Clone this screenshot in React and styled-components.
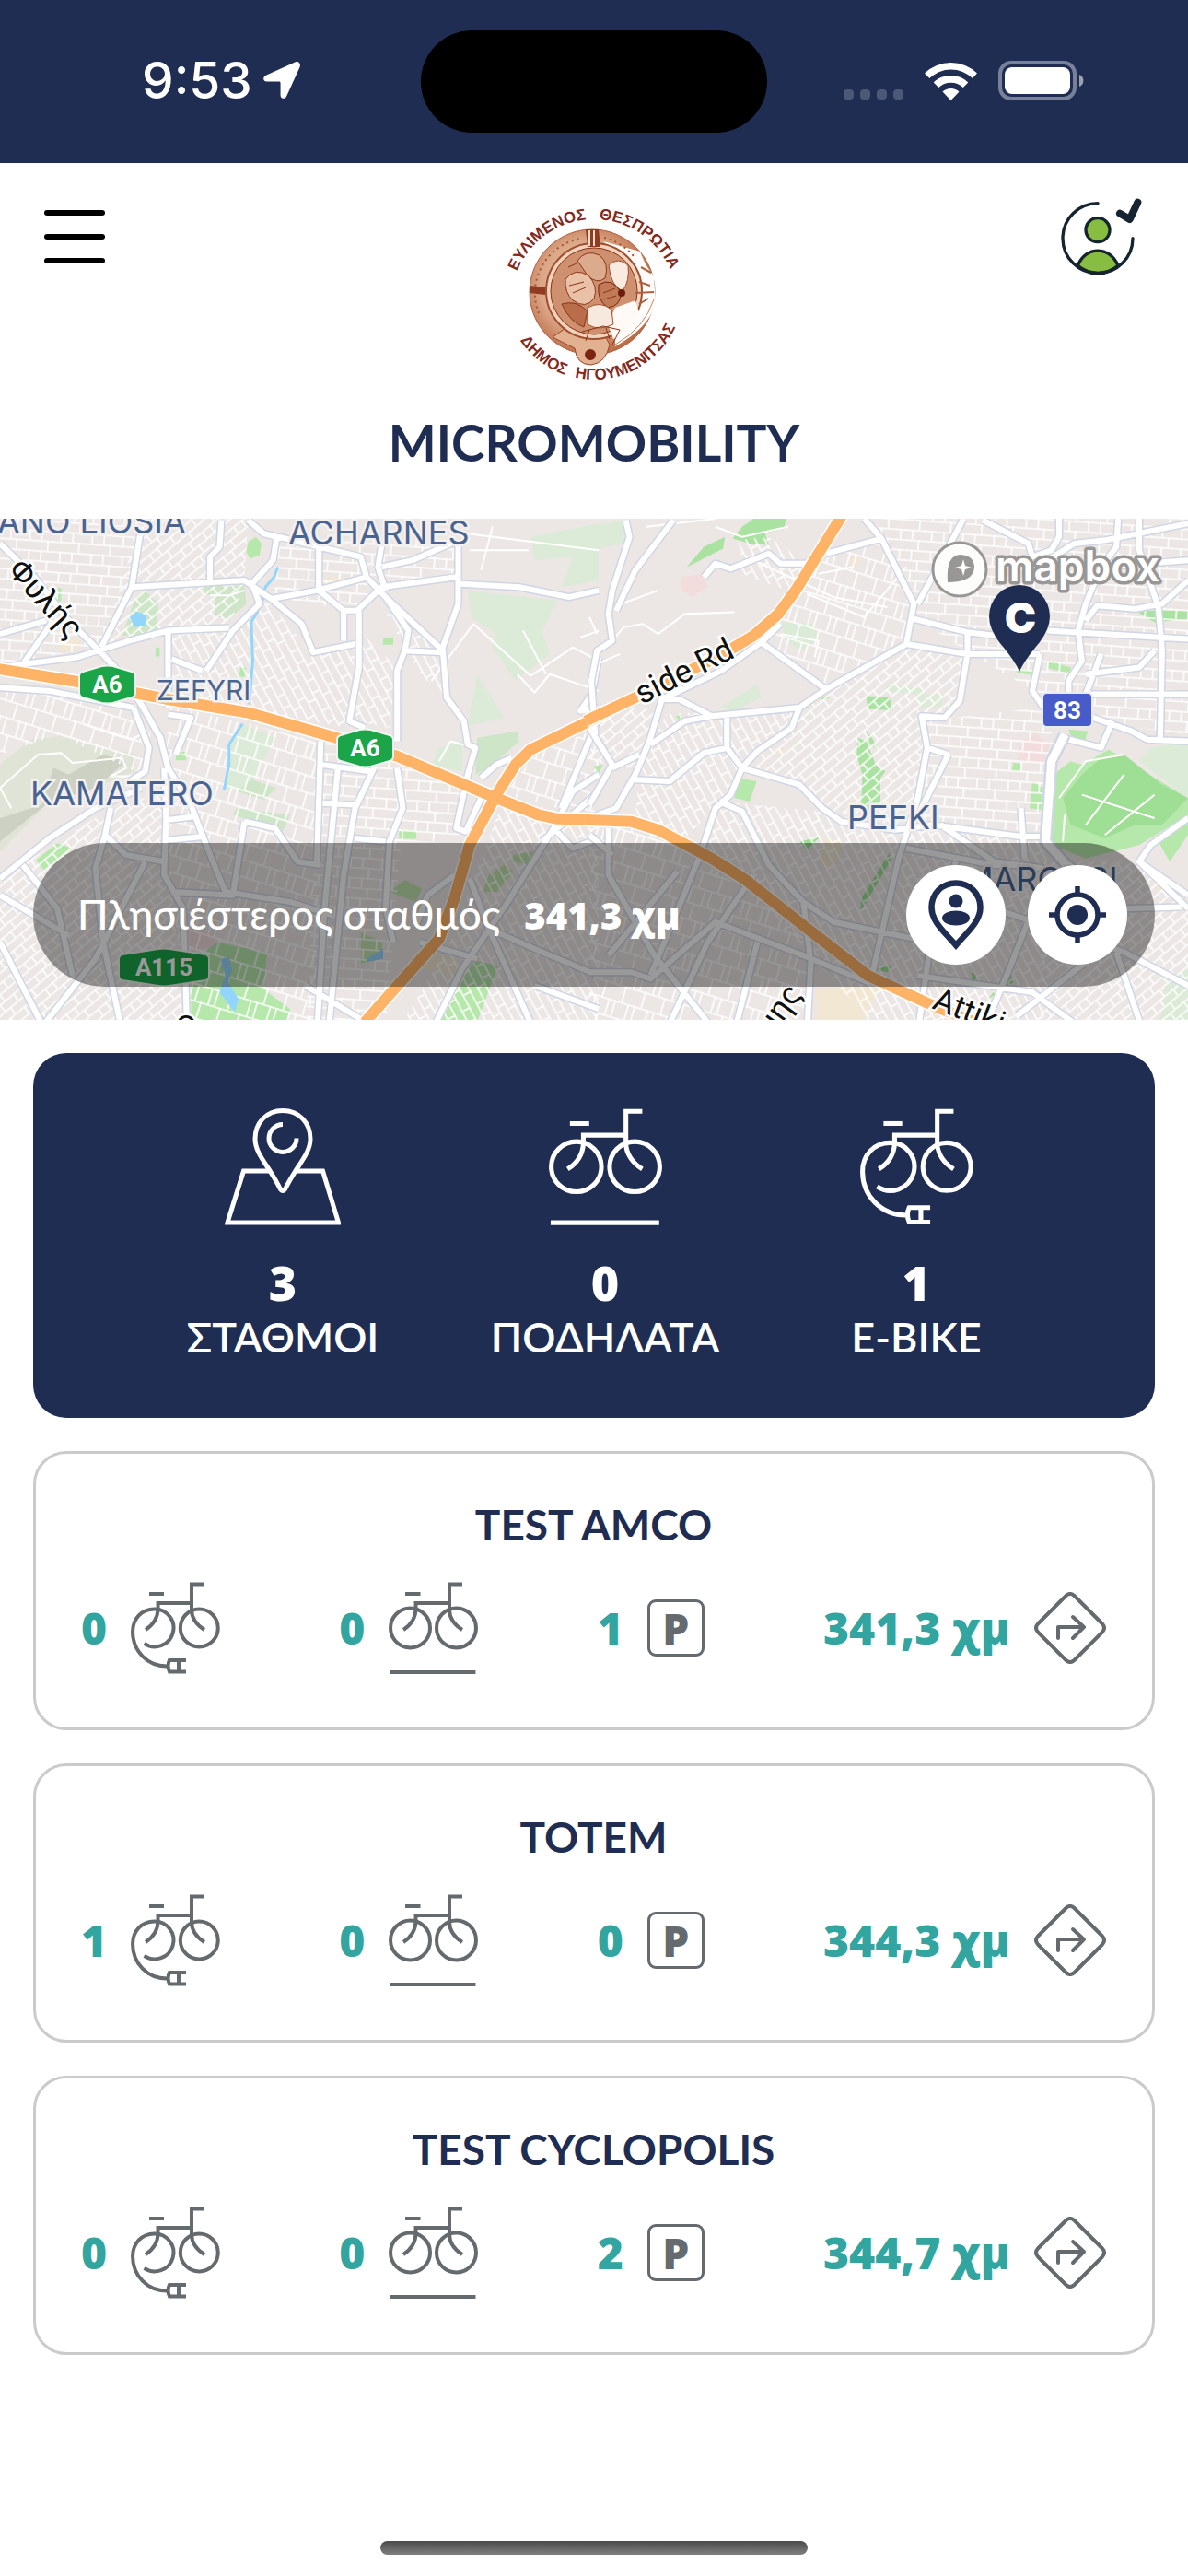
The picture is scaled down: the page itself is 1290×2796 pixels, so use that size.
import React from "react";
import styled, { createGlobalStyle } from "styled-components";

const navy = "#1e2d51";
const teal = "#32a5a0";
const grey = "#646a6e";

const GlobalStyle = createGlobalStyle`
  * { box-sizing: border-box; }
  body {
    margin: 0;
    background: #fff;
    font-family: Lato, "Open Sans", "Noto Sans", sans-serif;
    color: ${navy};
  }
  button {
    border: 0;
    padding: 0;
    background: none;
    font: inherit;
    color: inherit;
    cursor: pointer;
  }
  svg { display: block; }
`;

const Page = styled.div`
  min-height: 100vh;
  display: flex;
  flex-direction: column;
`;

/* ---------- status bar ---------- */

const StatusBar = styled.div`
  height: 177px;
  background: ${navy};
  color: #fff;
  display: grid;
  grid-template-columns: 1fr auto 1fr;
  align-items: center;
`;

const Clock = styled.div`
  display: flex;
  align-items: center;
  gap: 11px;
  padding: 0 0 3px 154px;
  font-family: Inter, sans-serif;
  font-size: 55px;
  line-height: 60px;
  font-weight: 500;
`;

const Island = styled.div`
  width: 376px;
  height: 111px;
  border-radius: 56px;
  background: #000;
`;

const Signals = styled.div`
  display: flex;
  align-items: flex-end;
  justify-content: flex-end;
  gap: 23px;
  padding: 0 113px 3px 0;
`;

/* ---------- header ---------- */

const Header = styled.header`
  display: flex;
  flex-direction: column;
  align-items: center;
  height: 386px;
  padding-top: 36px;
`;

const HeaderRow = styled.div`
  width: 100%;
  display: grid;
  grid-template-columns: 1fr auto 1fr;
  align-items: start;
  padding: 0 48px;
`;

const MenuButton = styled.button`
  width: 66px;
  height: 58px;
  margin-top: 15px;
  display: flex;
  flex-direction: column;
  justify-content: space-between;
`;

const MenuLine = styled.span`
  display: block;
  height: 6px;
  border-radius: 3px;
  background: #000;
`;

const UserButton = styled.button`
  justify-self: end;
`;

const Title = styled.h1`
  margin: 30px 0 0;
  font-size: 55px;
  line-height: 64px;
  font-weight: 700;
`;

/* ---------- map ---------- */

const MapBox = styled.section`
  position: relative;
  height: 544px;
  overflow: hidden;
`;

const MapSvg = styled.svg`
  width: 100%;
  height: 100%;
`;

const Place = styled.text`
  font-family: Inter, sans-serif;
  font-size: ${(props) => (props.$small ? 30 : 36)}px;
  fill: #4a6491;
  stroke: #f3f0f0;
  stroke-width: 5px;
  paint-order: stroke;
`;

const RoadName = styled.text`
  font-family: Roboto, "Noto Sans", sans-serif;
  font-size: 35px;
  fill: #111;
  stroke: #fff;
  stroke-width: 5px;
  paint-order: stroke;
`;

const ShieldText = styled.text`
  font-family: Roboto, sans-serif;
  font-size: 26px;
  font-weight: 700;
  fill: #fff;
  text-anchor: middle;
`;

const MapboxText = styled.text`
  font-family: Inter, sans-serif;
  font-size: 46px;
  font-weight: 600;
  fill: #fff;
  stroke: #999796;
  stroke-width: 7px;
  stroke-linejoin: round;
  paint-order: stroke;
`;

const PinText = styled.text`
  font-family: Inter, sans-serif;
  font-size: 46px;
  font-weight: 900;
  fill: #fff;
  text-anchor: middle;
`;

const NearestBar = styled.div`
  position: absolute;
  left: 36px;
  right: 36px;
  bottom: 36px;
  height: 156px;
  border-radius: 78px;
  background: rgba(0, 0, 0, 0.4);
  color: #fff;
  display: flex;
  align-items: center;
  gap: 24px;
  padding: 0 30px 0 48px;
`;

const NearestText = styled.p`
  margin: 0;
  flex: 1;
  display: flex;
  align-items: baseline;
  gap: 26px;
  font-size: 44px;
  line-height: 56px;
  font-weight: 500;
`;

const NearestDistance = styled.strong`
  font-family: "Open Sans", sans-serif;
  font-size: 40px;
  font-weight: 800;
`;

const RoundButton = styled.button`
  width: 108px;
  height: 108px;
  border-radius: 50%;
  background: #fff;
  display: grid;
  place-items: center;
`;

/* ---------- content ---------- */

const Content = styled.main`
  flex: 1;
  display: flex;
  flex-direction: column;
  gap: 36px;
  padding: 36px;
`;

const Stats = styled.section`
  display: grid;
  grid-template-columns: 348fr 352fr 324fr;
  height: 396px;
  padding: 60px 97px 0;
  border-radius: 36px;
  background: ${navy};
  color: #fff;
`;

const Stat = styled.div`
  display: flex;
  flex-direction: column;
  align-items: center;
`;

const StatValue = styled.strong`
  margin-top: 32px;
  font-family: "Open Sans", sans-serif;
  font-size: 52px;
  line-height: 60px;
  font-weight: 800;
`;

const StatLabel = styled.span`
  font-size: 45px;
  line-height: 58px;
  font-weight: 600;
`;

const Card = styled.article`
  height: 303px;
  border: 3px solid #cbcbcb;
  border-radius: 36px;
  padding: 45px 50px 0 49px;
`;

const CardTitle = styled.h2`
  margin: 0;
  text-align: center;
  font-size: 46px;
  line-height: 64px;
  font-weight: 700;
`;

const CardRow = styled.div`
  display: flex;
  align-items: center;
  justify-content: space-between;
  height: 100px;
  margin-top: 30px;
`;

const Figure = styled.div`
  display: flex;
  align-items: center;
  gap: 26px;
  color: ${teal};
  font-family: "Open Sans", sans-serif;
  font-size: 48px;
  line-height: 60px;
  font-weight: 800;
`;

const FigureIcon = styled.span`
  color: ${grey};
`;

const ParkingSign = styled.span`
  width: 62px;
  height: 62px;
  border: 3px solid ${grey};
  border-radius: 9px;
  display: grid;
  place-items: center;
  color: ${grey};
  font-size: 46px;
  line-height: 56px;
`;

const HomeBar = styled.div`
  align-self: center;
  width: 36%;
  height: 15px;
  margin-bottom: 23px;
  border-radius: 8px;
  background: linear-gradient(#4a4a4a, #808080);
`;

/* ---------- icons ---------- */

function LocationArrow() {
  return (
    <svg width="42" height="42" viewBox="0 0 44 44" fill="#fff">
      <path d="M37 1.500 L4 16.500 C0 18.500 .5 23.500 5 23.500 H18.500 C20 23.500 20.500 24 20.500 25.500 V39 C20.500 43.500 25.500 44 27.500 40 L42.500 7 C44 3 41 0 37 1.500 Z" />
    </svg>
  );
}

function StatusIcons() {
  return (
    <Signals>
      <svg width="65" height="12" viewBox="0 0 65 12" fill="#4b5876">
        {[0, 18, 36, 54].map((x) => (
          <rect key={x} x={x} width="11" height="11" rx="4" />
        ))}
      </svg>
      <svg width="57" height="42" viewBox="0 0 57 42" fill="#fff">
        <path d="M0 12.500 A41 41 0 0 1 57 12.500 L52 18 A33.500 33.500 0 0 0 5.300 18 Z" />
        <path d="M9.700 22.500 A27 27 0 0 1 47.300 22.500 L41.800 28 A19.500 19.500 0 0 0 15.200 28 Z" />
        <path d="M19.500 32.500 A13 13 0 0 1 37.500 32.500 L28.500 42 Z" />
      </svg>
      <svg width="93" height="43" viewBox="0 0 93 43">
        <rect x="2" y="2" width="81" height="39" rx="12" fill="none" stroke="#78819a" strokeWidth="4" />
        <rect x="7" y="7" width="71" height="29" rx="8" fill="#fff" />
        <path d="M88 15 A7 7 0 0 1 88 28 Z" fill="#9ba1b3" />
      </svg>
    </Signals>
  );
}

function UserIcon() {
  return (
    <svg width="92" height="88" viewBox="150 70 276 264" fill="none" stroke="#152430" strokeWidth="10" strokeLinecap="round">
      <path d="M211 296 C236 231 316 231 342 296 C305 328 248 328 211 296 Z" fill="#87be41" />
      <path d="M276 93 A114 114 0 1 0 390 207" />
      <circle cx="276" cy="180" r="39" fill="#87be41" />
      <path d="M348 126 L380 145 L406 90" strokeWidth="24" strokeLinejoin="round" />
    </svg>
  );
}

const BIKE_TOP = "M80 2.500 H66 V30 C66 39 72 47 80 52 M66 23 H29.500 V30 C29 40 24 47 16 52";

function BikeIcon({ size = 97, stroke = 4 }) {
  return (
    <svg width={size} height={size * 1.03} viewBox="0 0 97 100" fill="none" stroke="currentColor" strokeWidth={stroke}>
      <path d={BIKE_TOP} />
      <path d="M18 13 H34.500 M1.500 98 H94.500" />
      <circle cx="23.500" cy="50" r="21.500" />
      <circle cx="73.500" cy="50" r="21.500" />
    </svg>
  );
}

function EBikeIcon({ size = 97, stroke = 4 }) {
  return (
    <svg width={size} height={size * 1.03} viewBox="0 0 97 100" fill="none" stroke="currentColor" strokeWidth={stroke}>
      <path d={BIKE_TOP} />
      <path d="M20 13 H36" />
      <path d="M14.500 67 A20.500 20.500 0 1 0 25.500 29.500 C12 29.500 2 40 2 54 C2 75 18 91.500 39 91.500" />
      <circle cx="74.300" cy="50" r="20.500" />
      <path d="M60 85 H42 Q39 91 42 97.500 H60 M52 85 V97.500" />
    </svg>
  );
}

function StationIcon() {
  return (
    <svg width="126" height="127" viewBox="0 0 126 127" fill="none" stroke="currentColor" strokeWidth="5">
      <path d="M48 68 H20.500 L3 124 H123.500 L106.500 68 H78" />
      <path d="M63 2.500 C45 2.500 33 16 33 33 C33 50 48 62 60 87 Q63 92 66 87 C78 62 93 50 93 33 C93 16 81 2.500 63 2.500 Z" />
      <path d="M63 17.500 A15 15 0 1 0 78 32.500" />
    </svg>
  );
}

function DirectionsIcon() {
  return (
    <svg width="78" height="78" viewBox="0 0 78 78" fill="none" stroke={grey} strokeWidth="4" strokeLinecap="round" strokeLinejoin="round">
      <path d="M34.500 4 Q39 0 43.500 4 L74 34.500 Q78 39 74 43.500 L43.500 74 Q39 78 34.500 74 L4 43.500 Q0 39 4 34.500 Z" />
      <path d="M26 50 V38 H53 M42 27 L54 38 L42 50" />
    </svg>
  );
}

function PersonPinIcon() {
  return (
    <svg width="60" height="76" viewBox="0 0 60 76" fill={navy}>
      <path d="M30 3.500 C15 3.500 3.500 15 3.500 30 C3.500 45 17 56 30 71 C43 56 56.500 45 56.500 30 C56.500 15 45 3.500 30 3.500 Z" fill="none" stroke={navy} strokeWidth="6.500" />
      <circle cx="30" cy="23" r="7.500" />
      <ellipse cx="30" cy="41.500" rx="15" ry="8" />
    </svg>
  );
}

function LocateIcon() {
  return (
    <svg width="62" height="62" viewBox="0 0 62 62" fill="none" stroke={navy} strokeWidth="5.500">
      <circle cx="31" cy="31" r="22" />
      <circle cx="31" cy="31" r="11" fill={navy} stroke="none" />
      <path d="M31 0 V9 M31 53 V62 M0 31 H9 M53 31 H62" />
    </svg>
  );
}

const LogoText = styled.text`
  font-family: "Liberation Sans", sans-serif;
  font-size: 17px;
  font-weight: 700;
  fill: #84291b;
`;

function Logo() {
  return (
    <svg width="210" height="205" viewBox="540 213 210 205" role="img" aria-label="Δήμος Ηγουμενίτσας">
      <defs>
        <radialGradient id="clay" cx="0.45" cy="0.45" r="0.6">
          <stop offset="0" stopColor="#f0d3bd" />
          <stop offset="0.6" stopColor="#dba787" />
          <stop offset="1" stopColor="#b5603a" />
        </radialGradient>
        <path id="arcTop" d="M555 328 A90 90 0 0 1 735 328" />
        <path id="arcBottom" d="M548 315 A97 97 0 0 0 742 315" />
      </defs>
      <circle cx="643" cy="317" r="68" fill="url(#clay)" stroke="#b0603f" />
      <path d="M600 366 L624 378 Q626 396 642 396 Q658 394 662 374 L650 352 H620 Z" fill="#e2b191" stroke="#9c4526" />
      <path d="M655 262 L695 273 L701 287 L710 300 L712 330 Q704 356 668 376 L668 352 L690 330 L688 290 Z" fill="#fffdfb" />
      <path d="M668 374 Q700 356 710 325" fill="none" stroke="#c98463" />
      <circle cx="645" cy="316" r="52" fill="#efd3bd" stroke="#a04e2d" strokeWidth="2" />
      <circle cx="645" cy="316" r="47" fill="#cf9070" stroke="#8b3418" />
      <path d="M585 340 A60 60 0 0 1 630 259" fill="none" stroke="#a65432" strokeWidth="2" strokeDasharray="2 4" />
      <path d="M656 258 A60 60 0 0 1 688 278" fill="none" stroke="#a65432" strokeWidth="2" strokeDasharray="2 4" />
      <path d="M636 249 H650 L652 268 H638 Z M575 310 L592 312 V320 L575 318 Z" fill="#8f3c20" />
      <path d="M640 250 V267 M645 250 V267" stroke="#f3dccb" strokeWidth="2" />
      <path d="M668 334 L690 326 L694 340 Q684 362 666 368 L660 352 Z" fill="#fffaf6" />
      <path d="M627 283 Q636 270 651 277 Q662 286 657 302 Q648 309 638 299 Z" fill="#dcaa8d" stroke="#8b3418" />
      <path d="M614 303 Q624 290 639 299 Q650 311 645 324 Q636 336 622 326 Q613 318 614 303 Z" fill="#e8c1a7" stroke="#8b3418" />
      <path d="M661 288 Q671 278 682 288 Q684 305 676 316 Q663 310 661 288 Z" fill="#f9ebe0" stroke="#a04e2d" />
      <path d="M650 309 Q664 300 674 317 Q675 332 660 334 Q648 326 650 309 Z" fill="#c07a58" stroke="#7b2410" />
      <path d="M610 330 Q626 325 638 338 L634 355 Q619 350 610 330 Z" fill="#b96d4a" stroke="#8b3418" />
      <path d="M638 334 Q652 326 664 336 L666 352 Q650 360 638 352 Z" fill="#f8e9de" stroke="#a04e2d" />
      <path d="M632 360 L655 354 L673 358 L665 374 M640 358 L636 370 M658 356 L662 368 M617 290 L626 286 M618 310 L634 306 M622 318 L636 312 M655 318 L668 313 M656 325 L669 321" fill="none" stroke="#8b3418" />
      <circle cx="641" cy="385" r="6" fill="#7b2410" />
      <circle cx="675" cy="318" r="4" fill="#6d1d0c" />
      <path d="M696 290 L707 296 M694 306 L706 310 M690 318 L710 317 M694 330 L704 324" stroke="#b0603f" strokeWidth="2" />
      <LogoText>
        <textPath href="#arcTop" startOffset="47%" textAnchor="end">ΕΥΛΙΜΕΝΟΣ</textPath>
      </LogoText>
      <LogoText>
        <textPath href="#arcTop" startOffset="52%">ΘΕΣΠΡΩΤΙΑ</textPath>
      </LogoText>
      <LogoText>
        <textPath href="#arcBottom" startOffset="19%">ΔΗΜΟΣ</textPath>
      </LogoText>
      <LogoText>
        <textPath href="#arcBottom" startOffset="43%">ΗΓΟΥΜΕΝΙΤΣΑΣ</textPath>
      </LogoText>
    </svg>
  );
}

/* ---------- map drawing ---------- */

// the map is two tiles side by side, each with its own grid
const TILES = [
  {
    id: "west",
    transform: "translate(0 -13) scale(.4146 .3635)",
    districts: [
      ["a", "M0 36 H370 L345 240 L260 420 L0 470 Z"],
      ["b", "M370 36 H650 L640 220 L600 370 L270 410 Z"],
      ["c", "M0 540 L350 600 L400 690 L370 800 L150 680 L0 740 Z"],
      ["d", "M440 370 L620 360 L700 280 L820 440 L930 410 L910 660 L440 560 Z"],
      ["a", "M720 100 H1200 V210 L1000 250 L920 310 L720 270 Z"],
      ["c", "M440 590 L830 700 V1568 H500 L430 1000 Z"],
      ["b", "M0 1110 L290 900 L430 850 L480 1568 H0 Z"],
      ["a", "M840 700 L1040 760 L1050 1000 L1010 1568 H800 Z"],
      ["d", "M1000 300 L1160 430 L1170 570 L1100 500 Z M950 380 L1040 480 L1020 660 L930 640 Z"],
      ["d", "M1320 870 L1568 940 V1568 H1040 L1180 1300 Z"],
      ["c", "M1568 660 L1400 740 L1320 860 L1568 930 Z"],
      ["a", "M1050 770 L1210 850 L1200 1000 L1010 1000 Z"],
    ],
    greens: [
      ["#dcebd7", "M1390 90 L1568 50 V220 L1470 240 L1500 150 L1400 160 Z M1225 250 L1460 280 L1420 370 L1440 440 L1350 520 L1290 420 L1300 380 L1235 330 Z M1250 500 L1320 630 L1225 655 Z M640 650 L720 690 L650 850 L590 840 L605 710 Z M1150 720 L1210 700 V790 L1130 770 Z"],
      ["#cfe5c8", "M535 235 L640 235 L645 290 L600 335 L560 325 L565 270 L535 260 Z M355 270 L380 250 L415 290 L410 380 L320 385 Z M1250 690 L1355 670 L1360 700 L1280 780 L1245 800 Z M620 850 L660 815 L725 840 L690 875 Z M620 900 L760 920 L740 970 L610 920 Z"],
      ["#b6e8ab", "M650 105 L670 90 L685 110 L680 145 L655 155 L645 135 Z M95 1055 L150 1005 L190 1020 L115 1085 Z M1005 390 H1030 V412 H1002 Z M462 732 H487 V757 H460 Z M1045 968 H1090 V992 H1045 Z M500 1390 L560 1300 L700 1330 L690 1440 L760 1500 L740 1568 H500 Z M1240 1355 L1305 1370 L1240 1568 H1140 Z M630 480 L645 480 L640 510 L626 505 Z M147 243 H160 V282 H148 Z M408 420 H418 V447 H407 Z"],
      ["#c0e4ae", "M1345 1040 L1395 1030 L1390 1070 L1340 1060 Z M1280 1100 L1320 1070 L1345 1090 L1300 1150 L1265 1150 Z M1020 1150 L1060 1115 L1105 1140 L1090 1180 Z M945 1270 L1000 1300 V1340 L945 1365 Z"],
      ["#dfe4d7", "M0 770 L80 695 L160 685 L230 710 L360 740 L350 790 L250 840 L130 880 L0 1030 Z"],
      ["#cdd1c3", "M0 930 L110 890 L140 780 L180 800 L270 740 L330 760 L250 840 L130 880 L0 1000 Z"],
      ["#f2e7d2", "M155 405 L205 393 L212 420 L160 435 Z M848 215 L885 208 V224 L850 231 Z M1110 1330 L1200 1350 L1190 1400 L1110 1380 Z"],
      ["#f3dcdc", "M497 1260 L570 1270 L560 1310 L500 1330 Z"],
    ],
    lake: "M340 330 L360 312 L383 325 L380 355 L352 360 Z M578 1350 L600 1345 L608 1380 L598 1420 L625 1470 L615 1510 L575 1450 L590 1400 Z M960 1350 L1003 1320 V1350 L962 1360 Z",
    water: "M728 180 L718 210 L695 240 L685 290 L658 345 L662 460 L653 590 M635 648 L600 710 V770 L587 845",
    lanes:
      "M1230 130 H1385 M1260 190 L1290 60 M1220 80 L1568 130 M1130 520 L1240 350 L1390 505 L1500 420 L1568 460 M1355 500 L1400 555 L1440 500 L1568 550 M0 840 L30 900 M0 840 L100 740 L160 735 L190 765 L320 750 L330 780 L290 805 L355 805 M550 265 H600 L640 250 M1370 370 L1430 500 M220 650 L300 680 L345 695 L370 680 M1150 760 L1180 700 L1240 720 M1520 390 L1545 380 L1568 370",
    roads:
      "M0 110 L90 210 L180 340 L260 430 L310 490 L370 590 L420 690 L440 780 L500 890 L540 1010 L590 1150 L760 1180 L870 1220 M0 540 L130 550 L350 600 M0 380 L120 340 M0 480 L60 470 L200 450 L340 400 L440 370 L600 362 M60 470 L140 340 M370 60 L345 240 L265 420 M345 240 L640 220 L710 275 L830 250 L960 210 M580 40 L575 120 L550 150 V220 M650 40 L690 80 L725 90 L715 160 L660 230 L680 290 L610 370 L540 490 M710 275 L790 350 L820 435 L930 410 M835 120 V250 L900 310 H940 V480 L915 640 L955 660 M730 90 L945 150 L960 210 L1010 270 L1160 430 L1170 570 L1215 640 L1225 710 L1245 720 L1225 800 M1010 270 L1070 370 L1060 430 L1040 490 V700 M1060 430 L1155 435 L1200 290 V110 M1200 230 L1360 240 L1490 270 L1568 250 M935 310 L1000 240 L1195 210 M1000 180 L1080 160 L1190 105 M1000 110 L990 180 L1010 250 M900 310 V400 M840 700 L830 1060 M885 780 L850 1200 L830 1568 M980 780 L930 900 L900 1100 L860 1568 M1040 780 L1055 900 L1020 1000 L1010 1200 L1030 1300 M840 770 L970 790 M845 885 L930 890 M440 370 V600 M440 620 L500 630 L460 740 M450 455 L530 490 M350 600 L390 720 L380 790 L340 820 M430 780 L435 930 L430 1100 L480 1200 L490 1568 M440 935 L510 925 M440 995 L530 985 M0 1110 L130 990 L250 900 L370 840 M290 900 L275 980 L330 1040 L430 1060 M275 980 L250 1080 L270 1300 L320 1568 M640 940 L720 960 L780 1060 L840 1070 M640 940 L610 1160 L450 1150 M1450 960 L1330 1180 L1210 1380 L1130 1568 M1568 800 L1500 850 L1450 960 L1500 1020 L1568 990 M1568 600 L1520 610 L1550 560 L1568 450 M1260 810 L1300 770 L1340 750 M1260 870 L1220 970 L1195 960 L1225 800 M0 1300 L120 1568 M60 1070 L150 1200 L190 1400 M0 1160 L180 1280 M380 1060 L250 1350 L100 1568 M930 990 L1010 1000 M1190 1100 L1120 1160 L1090 1250 M1230 1110 L1280 1260 L1400 1568 M1280 1260 L1420 1330 L1568 1400 M1568 850 L1420 1000 M800 1430 L1000 1568 M1100 1300 L1250 1350 M1400 1430 L1568 1500 M1568 630 L1470 900",
    orange: ["M955 1540 L1150 1290 L1190 1170 L1230 1010 L1300 860 L1350 770 L1390 725 L1580 620", "M-10 483 L200 522 L440 575 L650 615 L880 690 L1040 745 L1290 865 L1410 920 L1460 932 L1580 935"],
  },
  {
    id: "east",
    transform: "translate(640 -13) scale(.4146 .3635)",
    districts: [
      ["d", "M390 100 L470 90 L570 170 L520 250 L400 200 Z"],
      ["c", "M620 150 L760 100 L850 290 L830 410 L620 540 L460 400 Z"],
      ["a", "M730 36 H1568 V680 L1300 640 L1180 560 L1000 440 L850 330 Z"],
      ["b", "M600 560 L830 420 L980 440 L960 600 L870 630 L880 720 L830 960 L640 910 L560 830 L410 780 Z"],
      ["a", "M880 640 L1180 600 L1220 700 L1190 970 L830 950 Z"],
      ["d", "M200 620 L560 600 L400 780 L330 900 L240 1000 L120 930 L130 800 Z"],
      ["c", "M0 950 H130 L580 1260 V1568 H0 Z"],
      ["d", "M340 880 L600 910 L820 960 L1200 1000 L1190 1568 H760 L400 1110 L290 1020 Z"],
      ["b", "M1190 1060 L1450 1060 L1568 1190 V1568 H1180 Z"],
      ["b", "M0 600 L180 600 L120 780 L0 760 Z"],
    ],
    greens: [
      ["#dcebd7", "M505 345 L590 350 L600 400 L550 430 L510 390 Z M0 60 L90 40 V110 L0 130 Z M340 600 L440 530 L450 570 L380 610 Z M780 530 L880 545 L870 560 L775 550 Z M860 560 H930 L920 598 H860 Z M1510 1420 L1568 1380 V1568 H1490 Z M1470 720 L1568 700 V870 L1440 760 Z"],
      ["#aae2a1", "M255 180 L300 120 L355 90 L350 125 L290 160 Z M375 95 L400 60 L430 36 H515 L510 65 L460 80 L470 115 L420 110 Z M726 565 L790 568 V608 L728 604 Z M703 690 L725 700 L750 770 L775 790 L762 810 V900 L730 910 L712 890 L715 800 L700 740 Z M725 670 L740 690 L760 730 L735 710 Z M1430 310 L1568 310 V335 L1480 345 Z"],
      ["#b6e8ab", "M1290 770 L1360 725 L1568 870 V920 L1440 1010 L1300 1050 L1210 1010 L1215 800 L1260 760 Z M1160 820 L1188 840 L1185 905 L1153 900 Z M390 810 L438 820 L420 880 L380 870 Z M1490 1000 L1568 930 V980 L1520 1060 Z M1120 485 L1168 490 L1160 503 L1120 495 Z M1200 460 L1262 480 L1255 497 L1200 482 Z M1255 665 L1305 670 L1300 695 L1262 690 Z M1110 765 L1130 768 V790 H1107 Z M225 625 L245 622 L235 636 Z M10 775 L35 770 L25 795 Z M1155 130 L1185 150 L1175 160 Z M605 570 L635 568 L610 580 Z"],
      ["#9fdf95", "M1290 800 L1340 750 L1400 740 L1500 830 L1568 870 L1500 950 L1430 950 L1350 990 L1260 950 L1240 870 Z M785 1035 L792 1050 L710 1210 L712 1170 Z M550 1000 L605 985 L570 1025 Z M745 1380 L795 1370 L780 1390 Z M1045 1470 L1100 1385 L1110 1420 Z M1000 1390 L1015 1400 L1005 1430 Z"],
      ["#f3dcdc", "M240 210 L300 200 L308 240 L270 270 L238 245 Z M1130 700 L1170 675 L1205 715 L1190 760 L1120 760 Z"],
      ["#f2e7d2", "M590 1440 L720 1430 L760 1440 L700 1568 H580 L600 1500 Z M682 150 L712 155 L705 178 L683 172 Z M600 1060 L620 990 L668 1000 L640 1085 Z M490 720 L515 725 L500 745 Z M1480 1100 L1510 1100 V1150 L1480 1140 Z"],
    ],
    lake: "",
    water: "",
    lanes:
      "M150 60 L330 36 M60 400 L90 360 L140 350 L180 380 L250 320 L380 315 M330 60 L400 90 L520 60 M410 150 L640 270 L780 300 M570 260 L720 330 L830 180 M600 200 L690 180 M1230 870 L1300 760 L1400 740 M1240 1000 L1245 920 M1290 860 L1480 930 M1300 950 L1400 800 M1350 980 L1480 860 M0 480 L80 440 M20 380 L0 330 M500 380 L600 400 L590 450 M180 250 L60 300",
    roads:
      "M95 40 L105 90 L60 250 L50 320 L60 400 L20 430 L5 520 L15 680 M220 40 L120 190 L70 310 M300 210 L330 170 L370 185 L470 140 L500 170 L570 170 M620 140 L765 95 M720 36 L765 95 L850 290 L830 410 L620 545 L550 600 L320 625 L235 575 L190 575 L345 490 L450 405 M450 405 L500 350 M450 405 L620 545 M830 410 L990 440 H1180 M850 335 L990 375 L1100 390 M1200 370 L1568 395 M980 36 L860 290 M990 375 V440 L970 580 L930 630 L870 625 L885 720 L860 870 L810 1050 L780 1200 L740 1400 M550 600 L530 660 L440 730 L400 780 L370 860 L330 900 L290 1040 L240 1180 L160 1400 M400 780 L550 830 L610 900 L660 940 L800 965 L900 950 L1130 985 H1190 M190 575 L160 690 L150 720 L120 800 L70 900 L0 930 M320 625 L250 640 L160 710 M360 630 V720 L300 735 L210 820 L120 815 M360 720 L400 780 M60 780 L130 740 M0 660 L60 770 L0 890 M1030 40 L1150 110 L1160 150 L1210 130 L1230 90 V36 M1200 160 L1270 110 L1350 100 L1568 50 M1385 36 L1380 120 L1340 180 L1300 290 L1280 370 L1290 460 L1255 520 V560 M1440 36 V130 L1490 300 L1500 430 L1495 690 M1345 180 L1568 160 M1300 340 L1330 295 L1430 305 L1500 290 L1568 220 M1180 440 L1160 550 L1190 600 M1300 500 L1440 480 L1480 430 M1340 440 L1300 560 L1568 560 M1320 630 L1420 670 L1460 695 L1568 700 M1240 690 L1340 720 L1370 640 M940 740 L870 900 L840 960 M885 720 L940 740 M920 950 L1060 1060 L1190 1080 M830 1020 L1060 1070 L1130 1070 M1130 900 L1140 1050 M1568 930 L1470 1010 L1440 1060 L1568 1160 M1440 1060 L1568 1200 M1400 1200 L1550 1195 M340 880 L400 910 L470 1070 L560 1180 L640 1240 L850 1290 M560 1180 L580 1360 L570 1568 M430 1100 L310 1300 L200 1568 M0 1390 H110 L160 1410 L330 1240 L560 1340 L730 1420 M50 960 V1100 L170 1340 L330 1568 M0 980 L60 1040 M230 1090 L50 1340 M960 1060 L900 1250 L860 1568 M1200 1090 L1100 1380 L1030 1568 M1060 1200 L1400 1330 L1568 1430 M1380 1330 L1450 1568 M1300 1360 L1120 1520 M440 1300 L380 1568 M860 1400 L1160 1450 L1300 1568",
    orange: ["M-10 640 L120 570 L350 440 L430 385 L495 320 L540 250 L665 20", "M-10 935 L110 940 L180 965 L320 1050 L410 1115 L560 1250 L730 1400 L900 1490 L1080 1570"],
    avenue: "M1245 680 L1210 760 L1195 1000 L1250 1070 L1300 1110",
  },
];

const PATTERNS = [
  ["a", 4, 17, 11],
  ["b", -40, 15, 9],
  ["c", 17, 11, 18],
  ["d", 62, 18, 9],
];

function Shield({ x, y, width, label }) {
  const r = width;
  return (
    <g transform={`translate(${x} ${y})`}>
      <path
        d={`M4 7 L${r / 2 - 6} 1 Q${r / 2} 0 ${r / 2 + 6} 1 L${r - 4} 7 Q${r} 8 ${r} 12 V30 Q${r} 34 ${r - 4} 35 L${r / 2 + 6} 41 Q${r / 2} 42 ${r / 2 - 6} 41 L4 35 Q0 34 0 30 V12 Q0 8 4 7 Z`}
        fill="#1ba548"
        stroke="#eef7ef"
        strokeWidth="2"
      />
      <ShieldText x={r / 2} y="30">{label}</ShieldText>
    </g>
  );
}

function CityMap() {
  return (
    <MapSvg viewBox="0 0 1290 544" preserveAspectRatio="xMidYMid slice">
      <defs>
        {PATTERNS.map(([id, angle, w, h]) => (
          <pattern key={id} id={`streets-${id}`} width={w * 2} height={h * 2} patternUnits="userSpaceOnUse" patternTransform={`scale(2.4 2.75) rotate(${angle})`}>
            <path d={`M0 1 H${w * 2} M0 ${h + 1} H${w * 2} M1 0 V${h} M${w + 4} ${h} V${h * 2} M${w - 3} 0 V${h}`} stroke="#fff" strokeWidth="1.600" fill="none" />
          </pattern>
        ))}
      </defs>
      <rect width="1290" height="544" fill="#ece7e5" />
      {TILES.map((tile) => (
        <g key={tile.id} transform={tile.transform}>
          {tile.greens.map(([fill, d]) => (
            <path key={fill} d={d} fill={fill} />
          ))}
          {tile.districts.map(([id, d]) => (
            <path key={d} d={d} fill={`url(#streets-${id})`} />
          ))}
          <path d={tile.lake} fill="#94d5fb" />
        </g>
      ))}
      {TILES.map((tile) => (
        <g key={tile.id} transform={tile.transform} fill="none" strokeLinejoin="round">
          <path d={tile.water} stroke="#94d5fb" strokeWidth="3" vectorEffect="non-scaling-stroke" />
          <path d={tile.lanes} stroke="#fff" strokeWidth="2" vectorEffect="non-scaling-stroke" />
          <path d={tile.roads} stroke="#d0d6e4" strokeWidth="9" vectorEffect="non-scaling-stroke" />
          <path d={tile.roads} stroke="#fff" strokeWidth="6" vectorEffect="non-scaling-stroke" />
          {tile.avenue && <path d={tile.avenue} stroke="#d0d6e4" strokeWidth="14" vectorEffect="non-scaling-stroke" />}
          {tile.avenue && <path d={tile.avenue} stroke="#fff" strokeWidth="9" vectorEffect="non-scaling-stroke" />}
        </g>
      ))}
      {TILES.map((tile) => (
        <g key={tile.id} transform={tile.transform} fill="none" strokeLinejoin="round">
          {tile.orange.map((d) => (
            <path key={d} d={d} stroke="#fff" strokeWidth="15" vectorEffect="non-scaling-stroke" />
          ))}
          {tile.orange.map((d) => (
            <path key={d + "o"} d={d} stroke="#ffb366" strokeWidth="12" vectorEffect="non-scaling-stroke" />
          ))}
        </g>
      ))}

      <Place x="-3" y="16">ANO LIOSIA</Place>
      <Place x="313" y="28">ACHARNES</Place>
      <Place x="170" y="197" $small>ZEFYRI</Place>
      <Place x="33" y="311">KAMATERO</Place>
      <Place x="920" y="337">PEFKI</Place>
      <Place x="1046" y="404">MAROUSI</Place>
      <RoadName transform="translate(7 57) rotate(48)">Φυλής</RoadName>
      <RoadName transform="translate(697 202) rotate(-27)">side Rd</RoadName>
      <RoadName transform="translate(1011 531) rotate(21)">Attiki</RoadName>
      <RoadName transform="translate(838 563) rotate(-54)">μης</RoadName>
      <RoadName x="190" y="564">Ο</RoadName>

      <Shield x={86} y={159} width={61} label="A6" />
      <Shield x={366} y={228} width={61} label="A6" />
      <Shield x={129} y={466} width={98} label="A115" />
      <rect x="1132" y="189" width="54" height="37" rx="5" fill="#485bcb" stroke="#e8ebf8" strokeWidth="2" />
      <ShieldText x="1159" y="217">83</ShieldText>

      <circle cx="1042" cy="55" r="29" fill="#fdfdfc" stroke="#999796" strokeWidth="3" />
      <path d="M1029 69 Q1027 39 1043 39 Q1058 40 1058 53 Q1057 69 1029 69 Z" fill="#999796" />
      <path d="M1046 44 L1048 51 L1055 53 L1048 55 L1046 62 L1044 55 L1037 53 L1044 51 Z" fill="#fff" />
      <MapboxText x="1081" y="68">mapbox</MapboxText>

      <path d="M1107 166 Q1102 154 1085 134 Q1074 119 1074 106 A33 34 0 0 1 1140 106 Q1140 119 1129 134 Q1112 154 1107 166 Z" fill={navy} />
      <PinText x="1108" y="124">C</PinText>
    </MapSvg>
  );
}

/* ---------- page ---------- */

const stations = [
  { name: "TEST AMCO", ebikes: 0, bikes: 0, parking: 1, distance: "341,3 χμ" },
  { name: "TOTEM", ebikes: 1, bikes: 0, parking: 0, distance: "344,3 χμ" },
  { name: "TEST CYCLOPOLIS", ebikes: 0, bikes: 0, parking: 2, distance: "344,7 χμ" },
];

function StationCard({ station }) {
  return (
    <Card>
      <CardTitle>{station.name}</CardTitle>
      <CardRow>
        <Figure>
          {station.ebikes}
          <FigureIcon><EBikeIcon /></FigureIcon>
        </Figure>
        <Figure>
          {station.bikes}
          <FigureIcon><BikeIcon /></FigureIcon>
        </Figure>
        <Figure>
          {station.parking}
          <ParkingSign>P</ParkingSign>
        </Figure>
        <Figure>
          {station.distance}
          <button type="button" aria-label="Οδηγίες"><DirectionsIcon /></button>
        </Figure>
      </CardRow>
    </Card>
  );
}

function App() {
  return (
    <Page>
      <GlobalStyle />
      <StatusBar>
        <Clock>
          9:53
          <LocationArrow />
        </Clock>
        <Island />
        <StatusIcons />
      </StatusBar>

      <Header>
        <HeaderRow>
          <MenuButton type="button" aria-label="Μενού">
            <MenuLine />
            <MenuLine />
            <MenuLine />
          </MenuButton>
          <Logo />
          <UserButton type="button" aria-label="Λογαριασμός"><UserIcon /></UserButton>
        </HeaderRow>
        <Title>MICROMOBILITY</Title>
      </Header>

      <MapBox>
        <CityMap />
        <NearestBar>
          <NearestText>
            Πλησιέστερος σταθμός <NearestDistance>341,3 χμ</NearestDistance>
          </NearestText>
          <RoundButton type="button" aria-label="Σταθμός"><PersonPinIcon /></RoundButton>
          <RoundButton type="button" aria-label="Η θέση μου"><LocateIcon /></RoundButton>
        </NearestBar>
      </MapBox>

      <Content>
        <Stats>
          <Stat>
            <StationIcon />
            <StatValue>3</StatValue>
            <StatLabel>ΣΤΑΘΜΟΙ</StatLabel>
          </Stat>
          <Stat>
            <BikeIcon size={123} />
            <StatValue>0</StatValue>
            <StatLabel>ΠΟΔΗΛΑΤΑ</StatLabel>
          </Stat>
          <Stat>
            <EBikeIcon size={123} />
            <StatValue>1</StatValue>
            <StatLabel>E-BIKE</StatLabel>
          </Stat>
        </Stats>
        {stations.map((station) => (
          <StationCard station={station} key={station.name} />
        ))}
      </Content>
      <HomeBar />
    </Page>
  );
}

export default App;
